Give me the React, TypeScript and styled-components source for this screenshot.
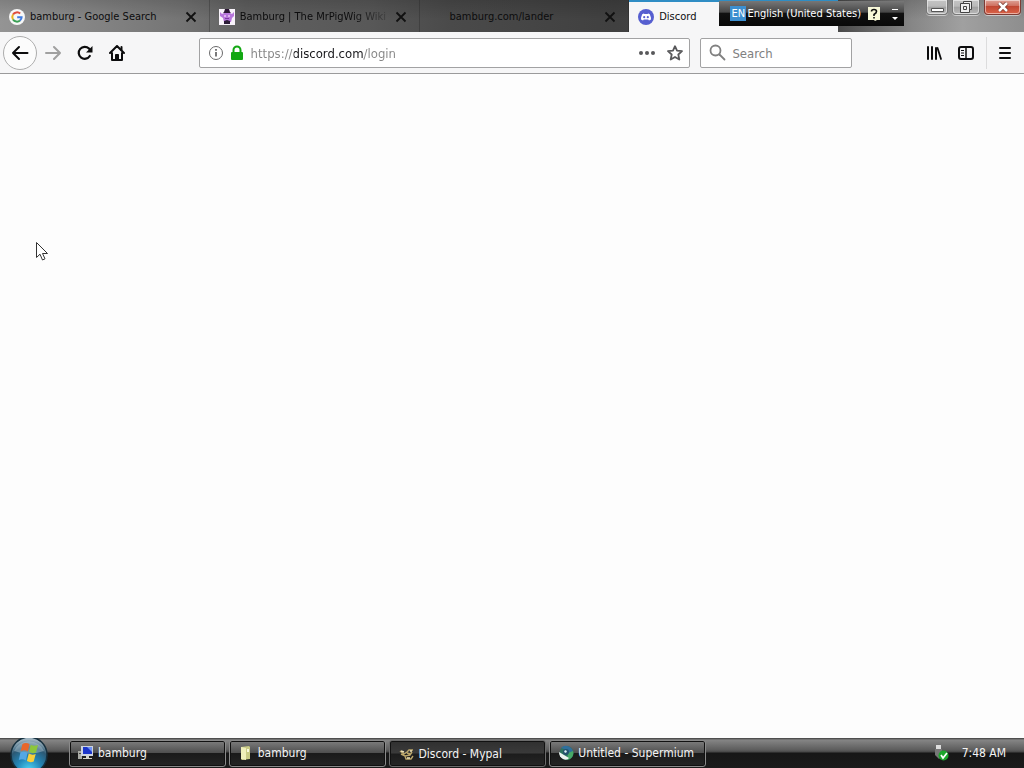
import React from "react";
import styled, { createGlobalStyle, css } from "styled-components";

const Global = createGlobalStyle`
  * { box-sizing: border-box; }
  body { margin: 0; background: #fdfdfd; }
  button, input { font: inherit; color: inherit; margin: 0; padding: 0; border: 0; background: none; }
  svg { display: block; flex: none; }
`;

const Screen = styled.div`
  position: relative;
  display: flex;
  flex-direction: column;
  min-height: 100vh;
  overflow: hidden;
  font-family: "DejaVu Sans Condensed", "DejaVu Sans", sans-serif;
  font-size: 11px;
  color: #0c0c0d;
`;

const TabStrip = styled.div`
  display: flex;
  height: 32px;
  background:
    linear-gradient(to bottom, rgba(0, 0, 0, 0.14), transparent 60%),
    linear-gradient(to right, #949494 0, #868686 8%, #747474 18%, #606060 24%, #585858 36%, #4a4a4a 44%, #404040 60%, #4a4a4a 82%, #868686 89%, #a0a0a0 94%, #8e8e8e 100%);
`;

const Tabs = styled.div`
  display: flex;
  flex: 0 1 838px;
  min-width: 0;
`;

const TabItem = styled.div<{ $active?: boolean }>`
  display: flex;
  align-items: center;
  flex: 1 1 0;
  min-width: 0;
  height: 33px;
  padding: 0 10px 0 9px;
  border-right: 1px solid rgba(30, 30, 30, 0.3);
  ${(p) =>
    p.$active &&
    css`
      background: #f6f6f7;
      border-right: 0;
      border-top: 2px solid #2f8dc4;
      padding-bottom: 2px;
    `}
`;

const TabTitle = styled.button<{ $fade?: boolean; $inset?: boolean }>`
  flex: 1;
  min-width: 0;
  margin-left: ${(p) => (p.$inset ? 21 : 5)}px;
  height: 24px;
  white-space: nowrap;
  text-align: left;
  ${(p) =>
    p.$fade &&
    css`
      mask-image: linear-gradient(to right, #000 75%, rgba(0, 0, 0, 0.2) 100%);
    `}
`;

const CloseTab = styled.button`
  flex: none;
  margin-left: 4px;
  width: 16px;
  height: 16px;
  display: grid;
  place-items: center;
`;

const WindowControls = styled.div`
  display: flex;
  gap: 4px;
  height: 15px;
  margin-left: auto;
  padding-right: 3px;
`;

const WindowButton = styled.button<{ $width: number; $close?: boolean }>`
  width: ${(p) => p.$width}px;
  height: 15px;
  display: grid;
  place-items: center;
  border: 1px solid ${(p) => (p.$close ? "#7d3b34" : "#777")};
  border-top: 0;
  border-radius: 0 0 4px 4px;
  box-shadow: inset 0 0 0 1px rgba(255, 255, 255, 0.5), 0 1px 0 rgba(255, 255, 255, 0.5);
  background: ${(p) =>
    p.$close
      ? "linear-gradient(#dda398 0, #d07262 40%, #c04632 45%, #da6449 100%)"
      : "linear-gradient(#c4c4c4 0, #bababa 45%, #a0a0a0 50%, #b8b8b8 100%)"};
`;

const Toolbar = styled.div`
  display: flex;
  align-items: center;
  height: 42px;
  padding: 0 3px;
  background: #f6f6f7;
  border-bottom: 1px solid #9a9a9b;
`;

const ToolButton = styled.button`
  width: 32px;
  height: 32px;
  display: grid;
  place-items: center;
`;

const BackButton = styled(ToolButton)`
  width: 34px;
  height: 34px;
  border: 1px solid #adadad;
  border-radius: 50%;
  background: #fcfcfc;
`;

const Spring = styled.div`
  flex: 67 1 0;
`;

const Field = styled.div`
  display: flex;
  align-items: center;
  min-width: 0;
  height: 30px;
  padding: 0 7px 0 8px;
  border: 1px solid #a2a2a3;
  border-radius: 2px;
  background: #fff;
  font-size: 13px;
`;

const AddressField = styled(Field)`
  flex: 485 1 0;
`;

const SearchField = styled(Field)`
  flex: none;
  width: 152px;
  margin-left: 10px;
`;

const Address = styled.input`
  flex: 1;
  min-width: 0;
  height: 26px;
  padding-top: 2px;
  margin-left: 7px;
  outline: 0;
  color: transparent;
  background: linear-gradient(to right, #858585 0 43px, #17171a 43px 113px, #858585 113px);
  background-clip: text;
  -webkit-background-clip: text;
`;

const SearchInput = styled.input`
  flex: 1;
  min-width: 0;
  height: 26px;
  padding-top: 2px;
  margin-left: 6px;
  outline: 0;
  &::placeholder { color: #808080; opacity: 1; }
`;

const FieldButton = styled.button`
  display: grid;
  place-items: center;
  width: 28px;
  height: 28px;
`;

const FieldIcons = styled.span`
  display: flex;
  align-items: center;
  gap: 6px;
`;

const Divider = styled.span`
  width: 1px;
  height: 32px;
  margin: 0 2px 0 4px;
  background: #dcdcdd;
`;

const Page = styled.main`
  flex: 1;
  background: #fdfdfd;
`;

const Taskbar = styled.footer`
  display: flex;
  align-items: center;
  height: 30px;
  padding-right: 18px;
  color: #f4f4f4;
  font-size: 12px;
  background: linear-gradient(#3d3d3d 0, #858585 2px, #5c5c5c 12px, #464646 14px, #161616 15px, #1b1b1b 100%);
`;

const Start = styled.button`
  width: 40px;
  height: 30px;
  margin-left: 9px;
  overflow: hidden;
`;

const Tasks = styled.nav`
  display: flex;
  flex: 0 1 637px;
  gap: 3px;
  min-width: 0;
  margin-left: 20px;
`;

const Task = styled.button<{ $active?: boolean }>`
  display: flex;
  align-items: center;
  flex: 1 1 0;
  min-width: 0;
  height: 27px;
  gap: 4px;
  padding: ${(p) => (p.$active ? "2px 8px 0 9px" : "0 8px")};
  overflow: hidden;
  white-space: nowrap;
  border: 1px solid ${(p) => (p.$active ? "#6b6b6b" : "#8a8a8a")};
  border-radius: 3px;
  box-shadow: inset 0 0 0 1px #111;
  background: ${(p) =>
    p.$active
      ? "linear-gradient(#303030 0, #3a3a3a 48%, #1c1c1c 52%, #262626 100%)"
      : "linear-gradient(#7d7d7d 0, #505050 46%, #1a1a1a 50%, #242424 100%)"};
`;

const Tray = styled.div`
  display: flex;
  align-items: center;
  gap: 13px;
  margin-left: auto;
`;

const LanguageBar = styled.div`
  position: absolute;
  top: 1px;
  right: 120px;
  display: flex;
  align-items: center;
  width: 185px;
  height: 25px;
  padding: 0 0 0 11px;
  color: #fff;
  background: linear-gradient(#777 0, #484848 44%, #111 50%, #080808 100%);
`;

const LanguageCode = styled.span`
  width: 17px;
  line-height: 15px;
  text-align: center;
  background: #3c8fd0;
`;

const LanguageName = styled.span`
  flex: 1;
  white-space: nowrap;
  margin-left: 1px;
`;

const LanguageButton = styled.button`
  display: grid;
  place-items: center;
  width: 18px;
  height: 20px;
  margin-left: 4px;
`;

const Pointer = styled.svg`
  position: absolute;
  left: 35px;
  top: 241px;
`;

const CloseGlyph = () => (
  <CloseTab aria-label="Close tab">
    <svg width="12" height="12" viewBox="0 0 12 12" stroke="#111" strokeWidth="1.8">
      <path d="M1.5 1.5l9 9M10.5 1.5l-9 9" />
    </svg>
  </CloseTab>
);

const GoogleIcon = () => (
  <svg width="16" height="16" viewBox="0 0 16 16" fill="none" strokeWidth="2">
    <circle cx="8" cy="8" r="8" fill="#f7f7f7" />
    <path d="M11.2 4.6A4.7 4.7 0 0 0 4 5.6" stroke="#df4c3c" />
    <path d="M4 5.6a4.7 4.7 0 0 0 0 4.9" stroke="#e8b422" />
    <path d="M4 10.5a4.7 4.7 0 0 0 7 1" stroke="#3a9f54" />
    <path d="M11 11.5A4.6 4.6 0 0 0 12.6 8.2H8.2" stroke="#3f7be0" />
  </svg>
);

const WikiIcon = () => (
  <svg width="16" height="16" viewBox="0 0 16 16">
    <path d="M0 0h16v16H0z" fill="#f9f3fb" />
    <path d="M1 3l2 2 2-1h6l2 1 2-2v4l-2 2-1 4H5L4 9 1 7z" fill="#b877dc" />
    <path d="M6 0h4l1 3 1 1H4l1-1z" fill="#2b1735" />
    <path d="M5 12l3-1 3 1v3H5z" fill="#2c1c38" />
    <path d="M5 6h2v2H5zM9 6h2v2H9z" fill="#dfb3f1" />
    <path d="M6 9h4v1H6z" fill="#803ca5" />
  </svg>
);

const DiscordIcon = () => (
  <svg width="16" height="16" viewBox="0 0 16 16">
    <circle cx="8" cy="8" r="8" fill="#565fd0" />
    <path d="M5.6 4.5l1 .4h2.8l1-.4 1.4.8 1.1 3.1.1 2-2 1.2-.8-1.1H5.8L5 11.6l-2-1.2.1-2 1.1-3.1z" fill="#fff" />
    <circle cx="6.2" cy="8.2" r="1.1" fill="#565fd0" />
    <circle cx="9.8" cy="8.2" r="1.1" fill="#565fd0" />
  </svg>
);

const StartOrb = () => (
  <svg width="40" height="38" viewBox="0 0 40 38">
    <defs>
      <radialGradient id="orb" cx="50%" cy="92%" r="85%">
        <stop offset="0" stopColor="#4fd6f5" />
        <stop offset=".4" stopColor="#2387b8" />
        <stop offset=".75" stopColor="#2c5873" />
        <stop offset="1" stopColor="#9fb4c0" />
      </radialGradient>
    </defs>
    <circle cx="20" cy="17" r="18" fill="url(#orb)" stroke="#16303f" strokeWidth="1.5" />
    <path d="M5 13a16 15 0 0 1 30 0q-15 5-30 0z" fill="#c3d5de" opacity=".4" />
    <path d="M13.5 6q3-2 7 0l-1.6 7.5q-3.5-2-7.2-.5z" fill="#e8662a" />
    <path d="M21.7 6.700q3.5 2 7.300.3l-2 7.5q-3.5 1.5-7-.5z" fill="#8cc63c" />
    <path d="M11.4 14.5q3.5-1.5 7.2.4l-1.8 7.5q-3.500-2-7-.4z" fill="#53a7e4" />
    <path d="M19.7 15.6q3.5 1.8 7 .5l-2 7.4q-3.4 1.5-6.8-.5z" fill="#f8cf3b" />
  </svg>
);

const ComputerIcon = () => (
  <svg width="16" height="16" viewBox="0 0 16 16">
    <path d="M0 6h4v8H0z" fill="#a9aaa4" />
    <path d="M1 8h2v1H1z" fill="#444" />
    <path d="M3 1h12v10H3z" fill="#ccd3df" />
    <path d="M5 2h9v7H5z" fill="#1b35c9" />
    <path d="M9 2h5v5z" fill="#6f92f5" />
    <path d="M8 11h3v2h3v1H5v-1h3z" fill="#d3d3c8" />
  </svg>
);

const FolderIcon = () => (
  <svg width="16" height="16" viewBox="0 0 16 16">
    <path d="M3 2l8-1 1 1v12l-8 1-1-1z" fill="#c9cb86" />
    <path d="M3 2l5 1v12l-5-1z" fill="#efefba" />
    <path d="M9 4h2v3H9z" fill="#f8f8df" />
  </svg>
);

const MypalIcon = () => (
  <svg width="16" height="16" viewBox="0 0 16 16" fill="none" stroke="#bba66a" strokeWidth="1.4">
    <path d="M1 5l4 3 3-2 2-2h4M2 8l4 2 5-1 2-3M6 10l1 3h5l2-3M8 7l3 1" />
    <path d="M2 5l3 1M11 5h2M8 12h3" stroke="#eee1b5" />
  </svg>
);

const SupermiumIcon = () => (
  <svg width="16" height="16" viewBox="0 0 16 16">
    <circle cx="8.5" cy="8" r="7" fill="#2c725f" />
    <path d="M3 3a7 7 0 0 1 12 4l-5 1-4-4z" fill="#2f6f9c" />
    <path d="M15 6a7 7 0 0 1-6 9l1-7z" fill="#47a867" />
    <path d="M1 7l5 3 5 3q-2 3-6 1-4-2-4-7z" fill="#eef3f1" />
    <circle cx="8" cy="7" r="3" fill="#24516d" />
    <path d="M6 6l2-1 1 2-2 1z" fill="#d9eef3" />
  </svg>
);

export default function App() {
  return (
    <>
      <Global />
      <Screen>
        <TabStrip>
          <Tabs>
            <TabItem>
              <GoogleIcon />
              <TabTitle>bamburg - Google Search</TabTitle>
              <CloseGlyph />
            </TabItem>
            <TabItem>
              <WikiIcon />
              <TabTitle $fade>Bamburg | The MrPigWig Wiki</TabTitle>
              <CloseGlyph />
            </TabItem>
            <TabItem>
              <TabTitle $inset>bamburg.com/lander</TabTitle>
              <CloseGlyph />
            </TabItem>
            <TabItem $active>
              <DiscordIcon />
              <TabTitle>Discord</TabTitle>
            </TabItem>
          </Tabs>
          <WindowControls>
            <WindowButton $width={22} aria-label="Minimize">
              <svg width="13" height="12" viewBox="0 0 13 12"><path d="M.5 7.5h12v3H.5z" fill="#fff" stroke="#555" /></svg>
            </WindowButton>
            <WindowButton $width={28} aria-label="Restore">
              <svg width="12" height="12" viewBox="0 0 12 12" fill="#eee" stroke="#444"><path d="M3.5.5h8v8h-8z" /><path d="M.5 2.500h9v9h-9z" /><path d="M3.500 5.500h3v3h-3z" /></svg>
            </WindowButton>
            <WindowButton $width={37} $close aria-label="Close">
              <svg width="12" height="10" viewBox="0 0 12 10"><path d="M2 1l8 8M10 1L2 9" stroke="#743329" strokeWidth="4" /><path d="M2 1l8 8M10 1L2 9" stroke="#fff" strokeWidth="2.5" /></svg>
            </WindowButton>
          </WindowControls>
        </TabStrip>

        <Toolbar>
          <BackButton aria-label="Back">
            <svg width="18" height="16" viewBox="0 0 18 16" fill="none" stroke="#0c0c0d" strokeWidth="2" strokeLinecap="round" strokeLinejoin="round"><path d="M16.500 8H2M8 2L2 8l6 6" /></svg>
          </BackButton>
          <ToolButton aria-label="Forward">
            <svg width="16" height="16" viewBox="0 0 16 16" fill="none" stroke="#a0a0a0" strokeWidth="2" strokeLinecap="round" strokeLinejoin="round"><path d="M1 8h14M9 2l6 6-6 6" /></svg>
          </ToolButton>
          <ToolButton aria-label="Reload">
            <svg width="16" height="16" viewBox="0 0 16 16" fill="none" stroke="#0c0c0d" strokeWidth="2.2" strokeLinecap="round"><path d="M12.8 11A6 6 0 1 1 12 3.6l1 1.2" /><path d="M15.5 1v6.500H9z" fill="#0c0c0d" stroke="none" /></svg>
          </ToolButton>
          <ToolButton aria-label="Home">
            <svg width="16" height="16" viewBox="0 0 16 16" fill="none" stroke="#0c0c0d" strokeWidth="2" strokeLinecap="round" strokeLinejoin="round"><path d="M1 8l7-7 7 7M3 8v7h10V8" /><path d="M6.500 14V9.500h3V14z" fill="#0c0c0d" strokeWidth="1" /><path d="M12.500 2v3" /></svg>
          </ToolButton>
          <Spring />
          <AddressField>
            <FieldIcons>
              <svg width="16" height="16" viewBox="0 0 16 16" fill="none" stroke="#6a6a6b"><circle cx="8" cy="8" r="6.5" /><path d="M8 7v4.500M8 4v1.700" strokeWidth="1.8" /></svg>
              <svg width="14" height="16" viewBox="0 0 14 16"><path d="M3.500 8V5a3.500 3.500 0 0 1 7 0v3" fill="none" stroke="#12a812" strokeWidth="2" /><rect x="1" y="7" width="12" height="8" rx="1" fill="#12a812" /></svg>
            </FieldIcons>
            <Address aria-label="Address" defaultValue="https://discord.com/login" />
            <FieldButton aria-label="Page actions">
              <svg width="18" height="6" viewBox="0 0 18 6" fill="#58585a"><circle cx="3" cy="3" r="2" /><circle cx="9" cy="3" r="2" /><circle cx="15" cy="3" r="2" /></svg>
            </FieldButton>
            <FieldButton as={BookmarkButton} aria-label="Bookmark this page">
              <svg width="16" height="16" viewBox="0 0 16 16" fill="none" stroke="#58585a" strokeWidth="1.8" strokeLinejoin="round"><path d="M8 1.200l2 4.500 5 .5-3.700 3.300 1 5L8 12l-4.300 2.500 1-5L1 6.200l5-.5z" /></svg>
            </FieldButton>
          </AddressField>
          <SearchField>
            <svg width="17" height="17" viewBox="0 0 17 17" fill="none" stroke="#808080" strokeWidth="1.8" strokeLinecap="round"><circle cx="6.5" cy="6.5" r="5" /><path d="M10.500 10.500l5 5" /></svg>
            <SearchInput aria-label="Search" placeholder="Search" />
          </SearchField>
          <Spring />
          <ToolButton aria-label="Library">
            <svg width="16" height="16" viewBox="0 0 16 16" fill="none" stroke="#0c0c0d" strokeWidth="2" strokeLinecap="round"><path d="M2 2v12M6 2v12M10 3v11" /><path d="M11.500 3l3.500 11" strokeWidth="1.8" /></svg>
          </ToolButton>
          <ToolButton aria-label="Sidebars">
            <svg width="16" height="16" viewBox="0 0 16 16" fill="none" stroke="#0c0c0d" strokeWidth="2"><rect x="1" y="2" width="14" height="12" rx="2" /><path d="M8 2v12" strokeWidth="1.5" /><path d="M3 5.500h3M3 8h3M3 10.500h3" strokeWidth="1" /></svg>
          </ToolButton>
          <Divider />
          <ToolButton aria-label="Menu">
            <svg width="14" height="14" viewBox="0 0 14 14" stroke="#0c0c0d" strokeWidth="2" strokeLinecap="round"><path d="M2 2h10M2 7h10M2 12h10" /></svg>
          </ToolButton>
        </Toolbar>

        <Page />

        <Taskbar>
          <Start aria-label="Start"><StartOrb /></Start>
          <Tasks>
            <Task><ComputerIcon />bamburg</Task>
            <Task><FolderIcon />bamburg</Task>
            <Task $active><MypalIcon />Discord - Mypal</Task>
            <Task><SupermiumIcon />Untitled - Supermium</Task>
          </Tasks>
          <Tray>
            <svg width="16" height="18" viewBox="0 0 16 18"><path d="M3 1h5v4H3z" fill="#ddd" /><path d="M2 5h7v7l-3 3-4-4z" fill="#777" /><circle cx="10.5" cy="11.5" r="5" fill="#1da62d" /><path d="M8 11l2 3 4-5" fill="none" stroke="#fff" strokeWidth="1.7" /></svg>
            <time>7:48 AM</time>
          </Tray>
        </Taskbar>

        <LanguageBar>
          <LanguageCode>EN</LanguageCode>
          <LanguageName>English (United States)</LanguageName>
          <LanguageButton aria-label="Help">
            <svg width="12" height="14" viewBox="0 0 12 14"><path d="M0 0h12v13H9l-2 1-1-1H0z" fill="#f8f8d8" /><path d="M3.500 4.500q0-2 2.500-2t2.500 2Q8.500 6 6 7.500V9M6 10v1.500" fill="none" stroke="#111" strokeWidth="1.6" /></svg>
          </LanguageButton>
          <LanguageButton aria-label="Options">
            <svg width="8" height="14" viewBox="0 0 8 14" fill="#fff"><path d="M1 2h6v1H1zM1 10h6l-3 3z" /></svg>
          </LanguageButton>
        </LanguageBar>

        <Pointer width="14" height="21" viewBox="0 0 14 21" aria-hidden="true">
          <path d="M1.500 1.500v15l3.500-3.300 2.500 5.800 2.500-1.200-2.500-5.300h5z" fill="#fff" stroke="#333" />
        </Pointer>
      </Screen>
    </>
  );
}

const BookmarkButton = styled.button`
  margin-right: -7px;
`;
